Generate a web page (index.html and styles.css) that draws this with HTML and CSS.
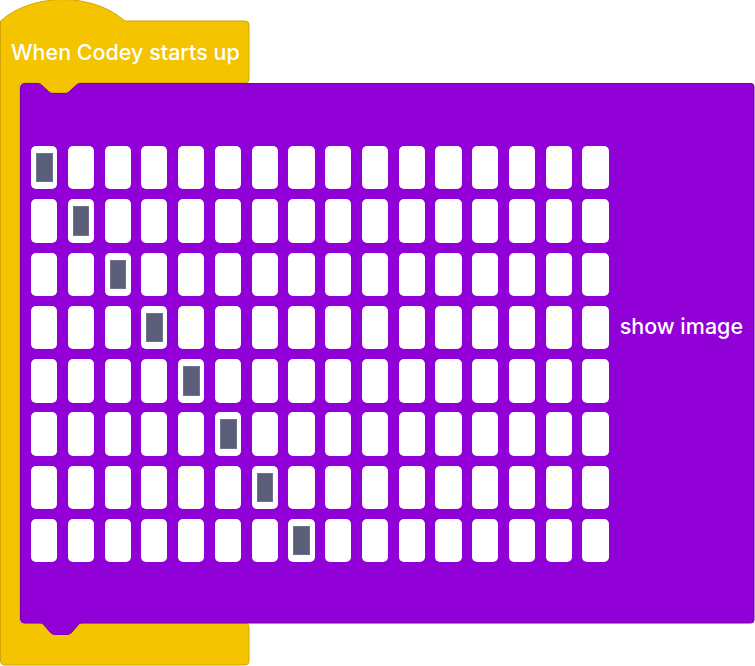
FILE: index.html
```html
<!DOCTYPE html>
<html>
<head>
<meta charset="utf-8">
<link rel="stylesheet" href="styles.css">
</head>
<body>
<div class="script">
  <svg class="shape" width="755" height="666" viewBox="0 0 755 666" aria-hidden="true">
    <path class="hat-fill" d="M0.5,21 c32.5,-28.6 92,-28.6 124.5,0 H245 a4,4 0 0 1 4,4 V79 a4,4 0 0 1 -4,4 H80 c-2,0 -3,1 -4,2 l-6,5.5 c-1,1 -2.5,2.5 -5,2.5 h-12 c-2.5,0 -4,-1.5 -5,-2.5 l-6,-5.5 c-1,-1 -2,-2 -4,-2 H20 V623 H245 a4,4 0 0 1 4,4 V661 a4,4 0 0 1 -4,4 H4.5 a4,4 0 0 1 -4,-4 Z"/>
    <path class="body-fill" d="M20.5,87.5 a4,4 0 0 1 4,-4 H38 c2,0 3,1 4,2 l6,5.5 c1,1 2.5,2.5 5,2.5 h12 c2.5,0 4,-1.5 5,-2.5 l6,-5.5 c1,-1 2,-2 4,-2 H751 a3,3 0 0 1 3,3 V620 a3,3 0 0 1 -3,3 H82 c-2,0 -3,1 -4,2 l-6,7 c-1,1 -2.5,2.5 -5,2.5 h-12 c-2.5,0 -4,-1.5 -5,-2.5 l-6,-7 c-1,-1 -2,-2 -4,-2 H24.5 a4,4 0 0 1 -4,-4 Z"/>
  </svg>
  <div class="hat">When Codey starts up</div>
  <div class="block">
    <div class="matrix" id="matrix"></div>
    <div class="label">show image</div>
  </div>
</div>
<script src="app.js"></script>
</body>
</html>
```

FILE: styles.css
```css
html, body {
  margin: 0;
  padding: 0;
  background: #ffffff;
}
body {
  width: 755px;
  height: 666px;
  overflow: hidden;
  font-family: Inter, Roboto, "Liberation Sans", sans-serif;
}
.script {
  position: relative;
  width: 755px;
  height: 666px;
}
.shape {
  position: absolute;
  left: 0;
  top: 0;
  z-index: 0;
}
.hat-fill {
  fill: #f5c400;
  stroke: #d2a700;
  stroke-width: 1;
}
.body-fill {
  fill: #9100d6;
  stroke: #7600ad;
  stroke-width: 1;
}
.hat {
  position: relative;
  z-index: 1;
  box-sizing: border-box;
  height: 83px;
  padding: 21px 0 0 11px;
  display: flex;
  align-items: center;
  color: #ffffff;
  font-size: 21.5px;
  font-weight: 500;
  line-height: 26px;
  white-space: nowrap;
}
.block {
  position: relative;
  z-index: 1;
  display: flex;
  align-items: flex-start;
  padding: 63px 0 0 31px;
  gap: 11px;
}
.matrix {
  display: grid;
  grid-template-columns: repeat(16, 26.2px);
  grid-auto-rows: 43.4px;
  column-gap: 10.58px;
  row-gap: 9.9px;
}
.cell {
  background: #ffffff;
  border-radius: 5px;
  box-sizing: border-box;
  padding: 7px 4.5px 7px 5px;
}
.cell.on .dot {
  width: 100%;
  height: 100%;
  box-sizing: border-box;
  background: #5c5f79;
  border: 1px solid #70738c;
}
.label {
  margin-top: 167px;
  color: #ffffff;
  font-size: 21.5px;
  font-weight: 500;
  line-height: 26px;
  white-space: nowrap;
}
```

FILE: app.js
```js
(function () {
  var m = document.getElementById('matrix');
  for (var r = 0; r < 8; r++) {
    for (var c = 0; c < 16; c++) {
      var d = document.createElement('div');
      d.className = 'cell' + (r === c ? ' on' : '');
      if (r === c) {
        var i = document.createElement('div');
        i.className = 'dot';
        d.appendChild(i);
      }
      m.appendChild(d);
    }
  }
})();
```
